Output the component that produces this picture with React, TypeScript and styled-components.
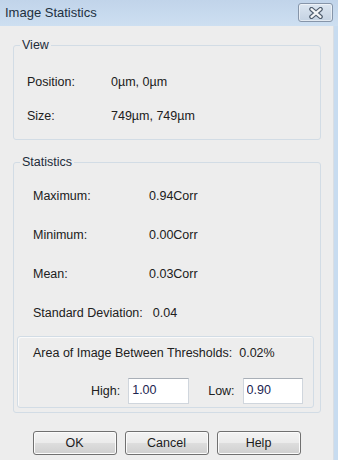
import React from 'react'
import styled, { createGlobalStyle } from 'styled-components'

const GlobalStyle = createGlobalStyle`
  html, body {
    margin: 0;
    padding: 0;
  }
  body {
    font-family: "Liberation Sans", Arial, sans-serif;
    background: #ededed;
  }
`

const Window = styled.div`
  width: 338px;
  height: 460px;
  display: flex;
  flex-direction: column;
  background: #ededed;
  overflow: hidden;
`

const TitleBar = styled.div`
  height: 26px;
  flex: none;
  box-sizing: border-box;
  display: flex;
  align-items: flex-start;
  justify-content: space-between;
  padding: 0 5px;
  background: linear-gradient(#c1d4ea, #cddff1);
`

const Title = styled.span`
  font-size: 13px;
  line-height: 26px;
  color: #22303f;
`

const CloseButton = styled.div`
  width: 35px;
  height: 19px;
  margin-top: 3px;
  box-sizing: border-box;
  border: 1px solid #8695a9;
  border-radius: 3px;
  background: linear-gradient(#dce6f1, #c4d2e2);
  box-shadow: inset 0 0 0 1px rgba(255, 255, 255, 0.5);
  display: flex;
  align-items: center;
  justify-content: center;
`

const Frame = styled.div`
  flex: 1;
  display: flex;
`

const Content = styled.div`
  flex: 1;
  padding: 12px 12px 0 13px;
  display: flex;
  flex-direction: column;
`

const FrameEdge = styled.div`
  width: 4px;
  flex: none;
  border-left: 1px solid #d9dee4;
  background: #c8dcf0;
`

const Group = styled.fieldset<{ $gap?: number }>`
  margin: ${p => p.$gap || 0}px 0 0 0;
  padding: 0;
  border: 1px solid #d2dce5;
  border-radius: 3px;
  min-width: 0;
`

const Legend = styled.legend`
  margin-left: 6px;
  padding: 0 2px;
  font-size: 12.5px;
  line-height: 15px;
  color: #222c3a;
`

const GroupBody = styled.div<{ $pad: string }>`
  padding: ${p => p.$pad};
  display: flex;
  flex-direction: column;
`

const Row = styled.div<{ $h: number; $indent?: number }>`
  height: ${p => p.$h}px;
  padding-left: ${p => p.$indent || 0}px;
  display: flex;
  align-items: center;
  font-size: 12.5px;
  color: #202020;
  white-space: nowrap;
`

const Label = styled.span<{ $w: number }>`
  min-width: ${p => p.$w}px;
  margin-right: 10px;
`

const InnerBox = styled.div`
  margin: 4px 6px 0 3px;
  padding: 6px 0 3px 15px;
  border: 1px solid #d2dce5;
  border-radius: 3px;
  box-shadow: inset 1px 1px 0 #fafafa;
  display: flex;
  flex-direction: column;
`

const AreaLabel = styled.span`
  margin-right: 7px;
`

const ThresholdRow = styled.div`
  margin-top: 15px;
  height: 26px;
  padding-left: 58px;
  display: flex;
  align-items: center;
  font-size: 12.5px;
  color: #202020;
`

const FieldLabel = styled.span<{ $before?: number }>`
  margin-left: ${p => p.$before || 0}px;
  margin-right: 8px;
`

const Field = styled.input<{ $w: number }>`
  width: ${p => p.$w}px;
  height: 26px;
  box-sizing: border-box;
  margin: 0;
  padding: 0 3px 3px;
  border: 1px solid #d0d6dd;
  border-top-color: #a9afb7;
  background: #fff;
  font-family: "Liberation Sans", Arial, sans-serif;
  font-size: 12.5px;
  color: #1c2450;
  outline: none;
`

const ButtonRow = styled.div`
  margin-top: 18px;
  display: flex;
  justify-content: center;
  gap: 8px;
  padding-right: 1px;
`

const Button = styled.button`
  width: 84px;
  height: 24px;
  box-sizing: border-box;
  border: 1px solid #707070;
  border-radius: 3px;
  background: linear-gradient(#f3f3f3 0%, #ebebeb 48%, #dddddd 52%, #cfcfcf 100%);
  box-shadow: inset 0 0 0 1px #fbfbfb;
  font-family: "Liberation Sans", Arial, sans-serif;
  font-size: 12.5px;
  color: #1c1c1c;
  padding: 0;
`

const CloseIcon = () => (
  <svg width="18" height="12" viewBox="0 0 18 12">
    <path d="M4.5 2.2 L13.5 9.8 M13.5 2.2 L4.5 9.8" stroke="#4f5d6e" strokeWidth="4.6" strokeLinecap="round" />
    <path d="M4.5 2.2 L13.5 9.8 M13.5 2.2 L4.5 9.8" stroke="#f4f6f8" strokeWidth="2.3" strokeLinecap="round" />
  </svg>
)

const stats = [
  { label: 'Maximum:', value: '0.94Corr' },
  { label: 'Minimum:', value: '0.00Corr' },
  { label: 'Mean:', value: '0.03Corr' },
  { label: 'Standard Deviation:', value: '0.04' },
]

export default function App() {
  return (
    <Window>
      <GlobalStyle />
      <TitleBar>
        <Title>Image Statistics</Title>
        <CloseButton>
          <CloseIcon />
        </CloseButton>
      </TitleBar>
      <Frame>
        <Content>
          <Group>
            <Legend>View</Legend>
            <GroupBody $pad="12px 0 6px 13px">
              <Row $h={34}>
                <Label $w={74}>Position:</Label>
                <span>0µm, 0µm</span>
              </Row>
              <Row $h={34}>
                <Label $w={74}>Size:</Label>
                <span>749µm, 749µm</span>
              </Row>
            </GroupBody>
          </Group>

          <Group $gap={15}>
            <Legend>Statistics</Legend>
            <GroupBody $pad="6px 0 4px 0">
              {stats.map(s => (
                <Row key={s.label} $h={39} $indent={19}>
                  <Label $w={106}>{s.label}</Label>
                  <span>{s.value}</span>
                </Row>
              ))}
              <InnerBox>
                <Row $h={20}>
                  <AreaLabel>Area of Image Between Thresholds:</AreaLabel>
                  <span>0.02%</span>
                </Row>
                <ThresholdRow>
                  <FieldLabel>High:</FieldLabel>
                  <Field $w={61} defaultValue="1.00" />
                  <FieldLabel $before={19}>Low:</FieldLabel>
                  <Field $w={60} defaultValue="0.90" />
                </ThresholdRow>
              </InnerBox>
            </GroupBody>
          </Group>

          <ButtonRow>
            <Button>OK</Button>
            <Button>Cancel</Button>
            <Button>Help</Button>
          </ButtonRow>
        </Content>
        <FrameEdge />
      </Frame>
    </Window>
  )
}
